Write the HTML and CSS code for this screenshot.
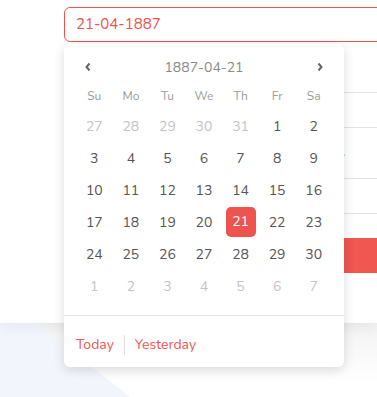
FILE: index.html
```html
<!DOCTYPE html>
<html>
<head>
<meta charset="utf-8">
<link rel="stylesheet" href="styles.css">
</head>
<body>
<div class="page">
  <div class="panel">
    <div class="form">
      <div class="input">21-04-1887</div>
      <div class="row r1"></div>
      <div class="row r2"></div>
      <div class="row r3"><span class="blue">›</span></div>
      <div class="row r4"></div>
      <div class="btn"></div>
    </div>
  </div>
  <div class="bottom"></div>

  <div class="picker">
    <div class="head">
      <svg class="arrow" width="8" height="10" viewBox="0 0 8 10"><path d="M5.5 1.5 L2.5 5 L5.5 8.5" fill="none" stroke="#666" stroke-width="2"/></svg>
      <span class="title">1887-04-21</span>
      <svg class="arrow" width="8" height="10" viewBox="0 0 8 10"><path d="M2.5 1.5 L5.5 5 L2.5 8.5" fill="none" stroke="#666" stroke-width="2"/></svg>
    </div>
    <div class="grid week">
      <span>Su</span><span>Mo</span><span>Tu</span><span>We</span><span>Th</span><span>Fr</span><span>Sa</span>
    </div>
    <div class="grid days">
      <span class="off">27</span><span class="off">28</span><span class="off">29</span><span class="off">30</span><span class="off">31</span><span>1</span><span>2</span>
      <span>3</span><span>4</span><span>5</span><span>6</span><span>7</span><span>8</span><span>9</span>
      <span>10</span><span>11</span><span>12</span><span>13</span><span>14</span><span>15</span><span>16</span>
      <span>17</span><span>18</span><span>19</span><span>20</span><span class="sel"><b>21</b></span><span>22</span><span>23</span>
      <span>24</span><span>25</span><span>26</span><span>27</span><span>28</span><span>29</span><span>30</span>
      <span class="off">1</span><span class="off">2</span><span class="off">3</span><span class="off">4</span><span class="off">5</span><span class="off">6</span><span class="off">7</span>
    </div>
    <div class="foot">
      <span class="link">Today</span>
      <span class="sep"></span>
      <span class="link">Yesterday</span>
    </div>
  </div>
</div>
</body>
</html>
```
FILE: styles.css
```css
html, body {
  margin: 0;
  padding: 0;
  width: 377px;
  height: 397px;
  overflow: hidden;
  font-family: "Nunito", "Lato", "Open Sans", sans-serif;
}
.page {
  position: relative;
  width: 377px;
  height: 397px;
  overflow: hidden;
  background: #fff;
}
.panel {
  height: 323px;
  background: #fff;
  position: relative;
  z-index: 1;
  box-shadow: 0 4px 14px rgba(0,0,0,0.06);
}
.form {
  margin-left: 64px;
  padding-top: 7px;
  width: 400px;
}
.input {
  height: 33px;
  border: 1px solid #ef5350;
  border-radius: 6px;
  box-sizing: content-box;
  padding-left: 11px;
  line-height: 33px;
  color: #ef5350;
  font-size: 15px;
}
.row {
  border-bottom: 1px solid #e3e3e6;
  position: relative;
}
.r1 { height: 50px; }
.r2 { height: 34px; }
.r3 { height: 50px; }
.r4 { height: 34px; }
.blue {
  position: absolute;
  left: 277px;
  top: 20px;
  color: #1565c0;
  font-size: 14px;
  line-height: 14px;
  font-weight: bold;
}
.btn {
  margin-top: 24px;
  height: 35px;
  background: #ef5750;
}
.bottom {
  height: 74px;
  position: relative;
  background: linear-gradient(to bottom, #f3f3f3, #fff 60px);
}
.bottom::before {
  content: "";
  position: absolute;
  left: 0; top: 0; right: 0; bottom: 0;
  background: #f3f5fc;
  clip-path: polygon(0 0, 37px 0, 130px 74px, 0 74px);
}
.picker {
  position: absolute;
  z-index: 2;
  left: 64px;
  top: 44px;
  width: 280px;
  height: 323px;
  box-sizing: border-box;
  background: #fff;
  border-radius: 6px;
  box-shadow: 0 3px 12px rgba(0,0,0,0.14);
  padding: 12px 12px 0;
  display: flex;
  flex-direction: column;
}
.head {
  height: 22px;
  display: flex;
  align-items: center;
  justify-content: space-between;
  padding: 0 8px;
}
.title {
  color: #8a8a8a;
  font-size: 14px;
}
.grid {
  display: grid;
  grid-template-columns: repeat(7, 1fr);
  text-align: center;
}
.week {
  margin-top: 4px;
  height: 28px;
  align-items: center;
  font-size: 12px;
  color: #9a9a9a;
}
.days {
  grid-auto-rows: 32px;
  align-items: center;
  justify-items: center;
  font-size: 14px;
  color: #555;
}
.days .off { color: #c4c4c8; }
.days .sel b {
  display: block;
  width: 30px;
  height: 30px;
  line-height: 30px;
  border-radius: 5px;
  background: #ef5350;
  color: #fff;
  font-weight: normal;
}
.foot {
  margin: 13px -12px 0;
  border-top: 1px solid #e5e5e8;
  flex: 1;
  display: flex;
  align-items: center;
  padding: 6px 12px 0;
}
.link {
  color: #ef5350;
  font-size: 14px;
}
.sep {
  width: 1px;
  height: 20px;
  background: #e0e0e4;
  margin: 0 10px;
}
```
